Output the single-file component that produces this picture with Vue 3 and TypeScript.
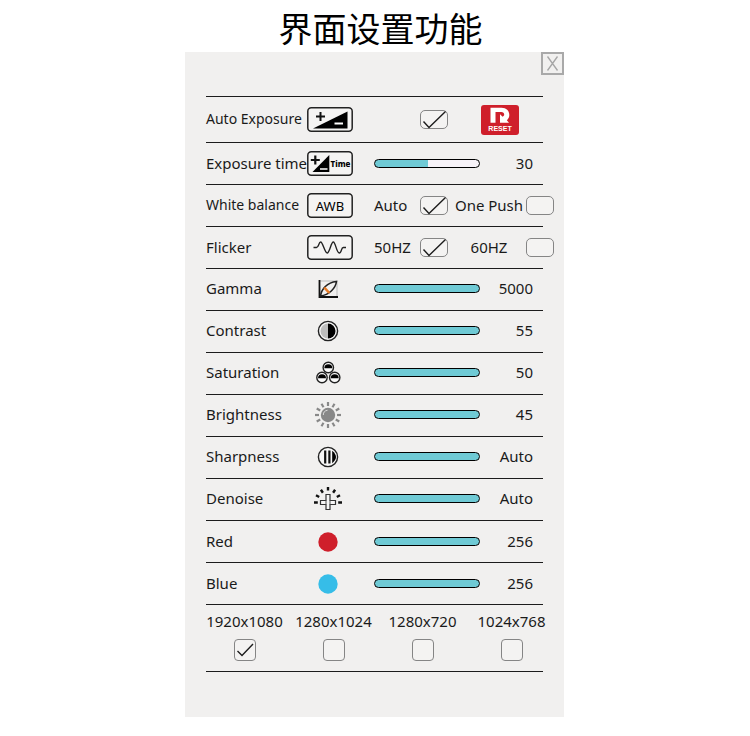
<script setup lang="ts">
import { reactive } from 'vue'

interface Slider {
  id: string
  label: string
  fill: number
  text: string
}

const toggles = reactive({
  autoExposure: true,
  autoBalance: true,
  onePush: false,
  hz50: true,
  hz60: false,
})

const exposure = reactive({ fill: 51, text: '30' })

const sliders = reactive<Slider[]>([
  { id: 'gamma', label: 'Gamma', fill: 100, text: '5000' },
  { id: 'contrast', label: 'Contrast', fill: 100, text: '55' },
  { id: 'saturation', label: 'Saturation', fill: 100, text: '50' },
  { id: 'brightness', label: 'Brightness', fill: 100, text: '45' },
  { id: 'sharpness', label: 'Sharpness', fill: 100, text: 'Auto' },
  { id: 'denoise', label: 'Denoise', fill: 100, text: 'Auto' },
  { id: 'red', label: 'Red', fill: 100, text: '256' },
  { id: 'blue', label: 'Blue', fill: 100, text: '256' },
])

const resolutions = reactive([
  { name: '1920x1080', on: true },
  { name: '1280x1024', on: false },
  { name: '1280x720', on: false },
  { name: '1024x768', on: false },
])

const rays = Array.from({ length: 12 }, (_, i) => i * 30)
const isColour = (id: string) => id === 'red' || id === 'blue'
</script>

<template>
  <main class="page">
    <h1 class="title">界面设置功能</h1>
    <section class="panel">
      <button class="close" type="button" aria-label="Close">
        <svg viewBox="0 0 23 23" width="23" height="23">
          <path d="M6.5 4.5 16.5 18.5M16.5 4.5 6.5 18.5" fill="none" stroke="#a6a6a6" stroke-width="1.3" />
        </svg>
      </button>

      <div class="row first">
        <label class="name tight" for="auto-exposure">Auto Exposure</label>
        <svg class="frame" viewBox="0 0 46 25">
          <rect class="edge" x="0.8" y="0.8" width="44.4" height="23.4" rx="3.5" />
          <path d="M6 21.5 40.5 4.5V21.5Z" />
          <path d="M13.5 5V14M9 9.5H18" fill="none" stroke="#111" stroke-width="2" />
          <path d="M27.5 16.5H36" stroke="#fff" stroke-width="2" />
        </svg>
        <div class="choices">
          <span class="tick second">
            <input id="auto-exposure" v-model="toggles.autoExposure" type="checkbox" />
            <svg v-if="toggles.autoExposure" viewBox="0 0 28 19"><path d="M3.5 11.5 9 17.5 25.5 1.5" /></svg>
          </span>
          <button class="reset" type="button" aria-label="Reset">
            <svg viewBox="0 0 38 30" width="38" height="30">
              <path
                d="M9.5 2.8H20.5C25.3 2.8 28.3 5.8 28.3 10C28.3 12.4 27.3 14 25.8 15.2L28 17.8H19V9.2L21.6 11.8C22.6 11.3 23.2 10.6 23.2 9.6C23.2 8 22.1 7 20.3 7H14.5V17.8H9.5Z"
                fill="#fff" />
              <text x="19" y="25.5" text-anchor="middle" class="reset-word">RESET</text>
            </svg>
          </button>
        </div>
      </div>

      <div class="row">
        <label class="name" for="exposure-time">Exposure time</label>
        <svg class="frame" viewBox="0 0 46 25">
          <rect class="edge" x="0.8" y="0.8" width="44.4" height="23.4" rx="3.5" />
          <path d="M5.5 21 22.3 4V21Z" />
          <path d="M8.3 4.5V13.5M3.8 9H12.8" fill="none" stroke="#111" stroke-width="2.2" />
          <path d="M13 18H20.5" stroke="#fff" stroke-width="1.5" />
          <text x="23.5" y="16" class="time-word">Time</text>
        </svg>
        <input id="exposure-time" v-model.number="exposure.fill" class="bar" type="range" min="0" max="100"
          :style="{ '--fill': exposure.fill + '%' }" />
        <output class="value" for="exposure-time">{{ exposure.text }}</output>
      </div>

      <div class="row">
        <span class="name tight">White balance</span>
        <svg class="frame" viewBox="0 0 46 25">
          <rect class="edge" x="0.8" y="0.8" width="44.4" height="23.4" rx="3.5" />
          <text x="23" y="17.5" text-anchor="middle" class="awb-word">AWB</text>
        </svg>
        <div class="choices">
          <label class="word" for="wb-auto">Auto</label>
          <span class="tick">
            <input id="wb-auto" v-model="toggles.autoBalance" type="checkbox" />
            <svg v-if="toggles.autoBalance" viewBox="0 0 28 19"><path d="M3.5 11.5 9 17.5 25.5 1.5" /></svg>
          </span>
          <label class="word middle" for="wb-push">One Push</label>
          <span class="tick">
            <input id="wb-push" v-model="toggles.onePush" type="checkbox" />
            <svg v-if="toggles.onePush" viewBox="0 0 28 19"><path d="M3.5 11.5 9 17.5 25.5 1.5" /></svg>
          </span>
        </div>
      </div>

      <div class="row">
        <span class="name">Flicker</span>
        <svg class="frame" viewBox="0 0 46 25">
          <rect class="edge" x="0.8" y="0.8" width="44.4" height="23.4" rx="3.5" />
          <path
            d="M6.5 12.5H9.5C11.8 12.5 11.6 7 13.7 7S17.8 18 20.2 18S24 7 26.3 7S29.5 18 32.3 18C34.8 18 34 12.5 36.3 12.5H39"
            fill="none" stroke="#222" stroke-width="1.4" />
        </svg>
        <div class="choices">
          <label class="word" for="hz50">50HZ</label>
          <span class="tick">
            <input id="hz50" v-model="toggles.hz50" type="checkbox" />
            <svg v-if="toggles.hz50" viewBox="0 0 28 19"><path d="M3.5 11.5 9 17.5 25.5 1.5" /></svg>
          </span>
          <label class="word middle" for="hz60">60HZ</label>
          <span class="tick">
            <input id="hz60" v-model="toggles.hz60" type="checkbox" />
            <svg v-if="toggles.hz60" viewBox="0 0 28 19"><path d="M3.5 11.5 9 17.5 25.5 1.5" /></svg>
          </span>
        </div>
      </div>

      <div v-for="s in sliders" :key="s.id" class="row" :class="{ picture: !isColour(s.id) }">
        <label class="name" :for="s.id">{{ s.label }}</label>
        <svg class="icon" viewBox="0 0 42 30">
          <g v-if="s.id === 'gamma'" fill="none">
            <path d="M13 7H30V22" stroke="#bbb" stroke-width="1" />
            <path d="M12.5 6V23H31" stroke="#111" stroke-width="1.8" />
            <path d="M13.500 22C14.500 15 20 8.500 29.500 7.500C28.500 14.500 22 21 13.500 22Z" stroke="#222" stroke-width="1.6" />
            <path d="M17.300 13.500 22.300 19" stroke="#e87b26" stroke-width="2.600" />
          </g>
          <g v-else-if="s.id === 'contrast'">
            <circle cx="21" cy="15" r="9.6" fill="#f7f7f7" stroke="#222" stroke-width="1.4" />
            <path d="M21 7.500A7.500 7.500 0 0 0 21 22.500Z" fill="#bdbdbd" />
            <path d="M21 7.500A7.500 7.500 0 0 1 21 22.500Z" fill="#000" />
          </g>
          <g v-else-if="s.id === 'saturation'">
            <g v-for="c in [[21.3, 9.5], [15, 19.5], [27.7, 19.5]]" :key="c[0]" :transform="`translate(${c[0]} ${c[1]})`">
              <circle r="5.2" fill="#fafafa" stroke="#222" stroke-width="1.4" />
              <path d="M-4 0.800A4 4 0 0 1 4 0.800Z" />
            </g>
          </g>
          <g v-else-if="s.id === 'brightness'">
            <circle cx="21" cy="15" r="7.2" fill="#888" />
            <path d="M16.300 15A4.800 4.800 0 0 1 20.500 10.300" fill="none" stroke="#ddd" stroke-width="1" />
            <path v-for="a in rays" :key="a" d="M21 6V2" :transform="`rotate(${a} 21 15)`" stroke="#888"
              stroke-width="2.2" />
          </g>
          <g v-else-if="s.id === 'sharpness'">
            <circle cx="21" cy="15" r="9.6" fill="#f7f7f7" stroke="#222" stroke-width="1.4" />
            <path d="M18.200 8.500V21.500M22.400 8.500V21.500" stroke="#111" stroke-width="2.200" />
            <path d="M25.200 8.800Q29 12 29 15T25.200 21.200Z" />
          </g>
          <g v-else-if="s.id === 'denoise'">
            <path d="M19 16.500V10.500H23V16.500H28.500V20.500H23V25.500H19V20.500H13.500V16.500Z" fill="#f7f7f7" stroke="#333" stroke-width="1.200" />
            <path d="M19 16.500V20.500M23 16.500V20.500" stroke="#555" stroke-width="1" />
            <path
              d="M7 18.500H10.800M9 11.200 12.200 13M13.900 5.800 15.900 8.700M21 3V6.500M28.100 5.800 26.100 8.700M33 11.200 29.800 13M31.200 18.500H35"
              fill="none" stroke="#111" stroke-width="2.400" />
          </g>
          <circle v-else-if="s.id === 'red'" cx="21" cy="15" r="9.7" fill="#cf1f2b" />
          <circle v-else cx="21" cy="15" r="9.7" fill="#36bde8" />
        </svg>
        <input :id="s.id" v-model.number="s.fill" class="bar" type="range" min="0" max="100"
          :style="{ '--fill': s.fill + '%' }" />
        <output class="value" :for="s.id">{{ s.text }}</output>
      </div>

      <div class="resolutions">
        <div v-for="r in resolutions" :key="r.name" class="resolution">
          <label :for="r.name">{{ r.name }}</label>
          <span class="tick square">
            <input :id="r.name" v-model="r.on" type="checkbox" />
            <svg v-if="r.on" viewBox="0 0 22 22"><path d="M3.5 12 8 16.5 19 5" /></svg>
          </span>
        </div>
      </div>
    </section>
  </main>
</template>

<style>
body {
  margin: 0;
  background: #fff;
}
</style>

<style scoped>
.page {
  box-sizing: border-box;
  padding: 0 1px 19px 0;
  font-family: "Noto Sans", "Noto Sans CJK SC", sans-serif;
  font-size: 15px;
  line-height: 20px;
  color: #1a1a1a;
}

.title {
  margin: 0;
  padding: 4px 0 0 12px;
  font-family: "Noto Sans CJK SC", sans-serif;
  font-size: 34px;
  font-weight: 400;
  line-height: 48px;
  text-align: center;
  color: #000;
}

.panel {
  position: relative;
  box-sizing: border-box;
  max-width: 379px;
  margin: 0 auto;
  padding: 44px 21px 45px;
  background: #f1f0ef;
}

.close {
  position: absolute;
  top: 0;
  right: 0;
  box-sizing: border-box;
  width: 23px;
  height: 23px;
  padding: 0;
  border: 0;
  outline: 2px solid #a9a9a9;
  outline-offset: -2px;
  background: transparent;
}

svg {
  display: block;
}

.row {
  box-sizing: border-box;
  display: grid;
  grid-template-columns: 101px 46px 127px 1fr;
  align-items: center;
  height: 42px;
  border-top: 1px solid #1c1c1c;
}

.first {
  height: 46px;
}

.picture {
  padding-bottom: 2px;
}

.name,
.word,
.value {
  padding-bottom: 2px;
  white-space: nowrap;
}

.tight {
  font-size: 14px;
}

.frame {
  width: 46px;
  height: 25px;
}

.edge {
  fill: #f5f4f3;
  stroke: #222;
  stroke-width: 1.5px;
}

.icon {
  width: 42px;
  height: 30px;
}

.awb-word {
  font-size: 13px;
}

.time-word {
  font-size: 8px;
  font-weight: 800;
}

.reset-word {
  font-size: 7px;
  font-weight: 900;
  fill: #fff;
}

.bar {
  appearance: none;
  box-sizing: border-box;
  width: 106px;
  height: 9px;
  margin: 0 0 0 21px;
  border: 1px solid #000;
  border-radius: 5px;
  background: linear-gradient(to right, #6fcad5 var(--fill), #f7f3f8 var(--fill));
}

.bar::-webkit-slider-thumb {
  appearance: none;
  width: 1px;
  height: 7px;
  background: transparent;
}

.value {
  padding-right: 10px;
  text-align: right;
}

.choices {
  grid-column: 3 / 5;
  display: grid;
  grid-template-columns: 46px 28px 1fr 28px;
  align-items: center;
  margin: 0 -11px 0 21px;
  white-space: nowrap;
}

.middle {
  padding-left: 4px;
  text-align: center;
}

.tick {
  position: relative;
  display: block;
  width: 28px;
  height: 19px;
}

.second {
  grid-column: 2;
}

.tick input {
  appearance: none;
  display: block;
  box-sizing: border-box;
  width: 100%;
  height: 100%;
  margin: 0;
  border: 1px solid #858585;
  border-radius: 5px;
  background: #f4f3f2;
}

.tick svg {
  position: absolute;
  inset: 0;
  width: 100%;
  height: 100%;
  pointer-events: none;
  fill: none;
  stroke: #1c1c1c;
  stroke-width: 1.4px;
}

.square {
  width: 22px;
  height: 22px;
}

.square input {
  border-radius: 4px;
}

.reset {
  grid-column: 3 / 5;
  width: 38px;
  height: 30px;
  margin-left: 33px;
  padding: 0;
  border: 0;
  border-radius: 3px;
  background: #cf1f2b;
}

.resolutions {
  box-sizing: border-box;
  display: flex;
  height: 68px;
  border-top: 1px solid #1c1c1c;
  border-bottom: 1px solid #1c1c1c;
}

.resolution {
  flex: 1 0 89px;
  display: flex;
  flex-direction: column;
  align-items: center;
  gap: 8px;
  padding-top: 6px;
}

.resolution:first-child {
  margin-left: -6px;
}
</style>
